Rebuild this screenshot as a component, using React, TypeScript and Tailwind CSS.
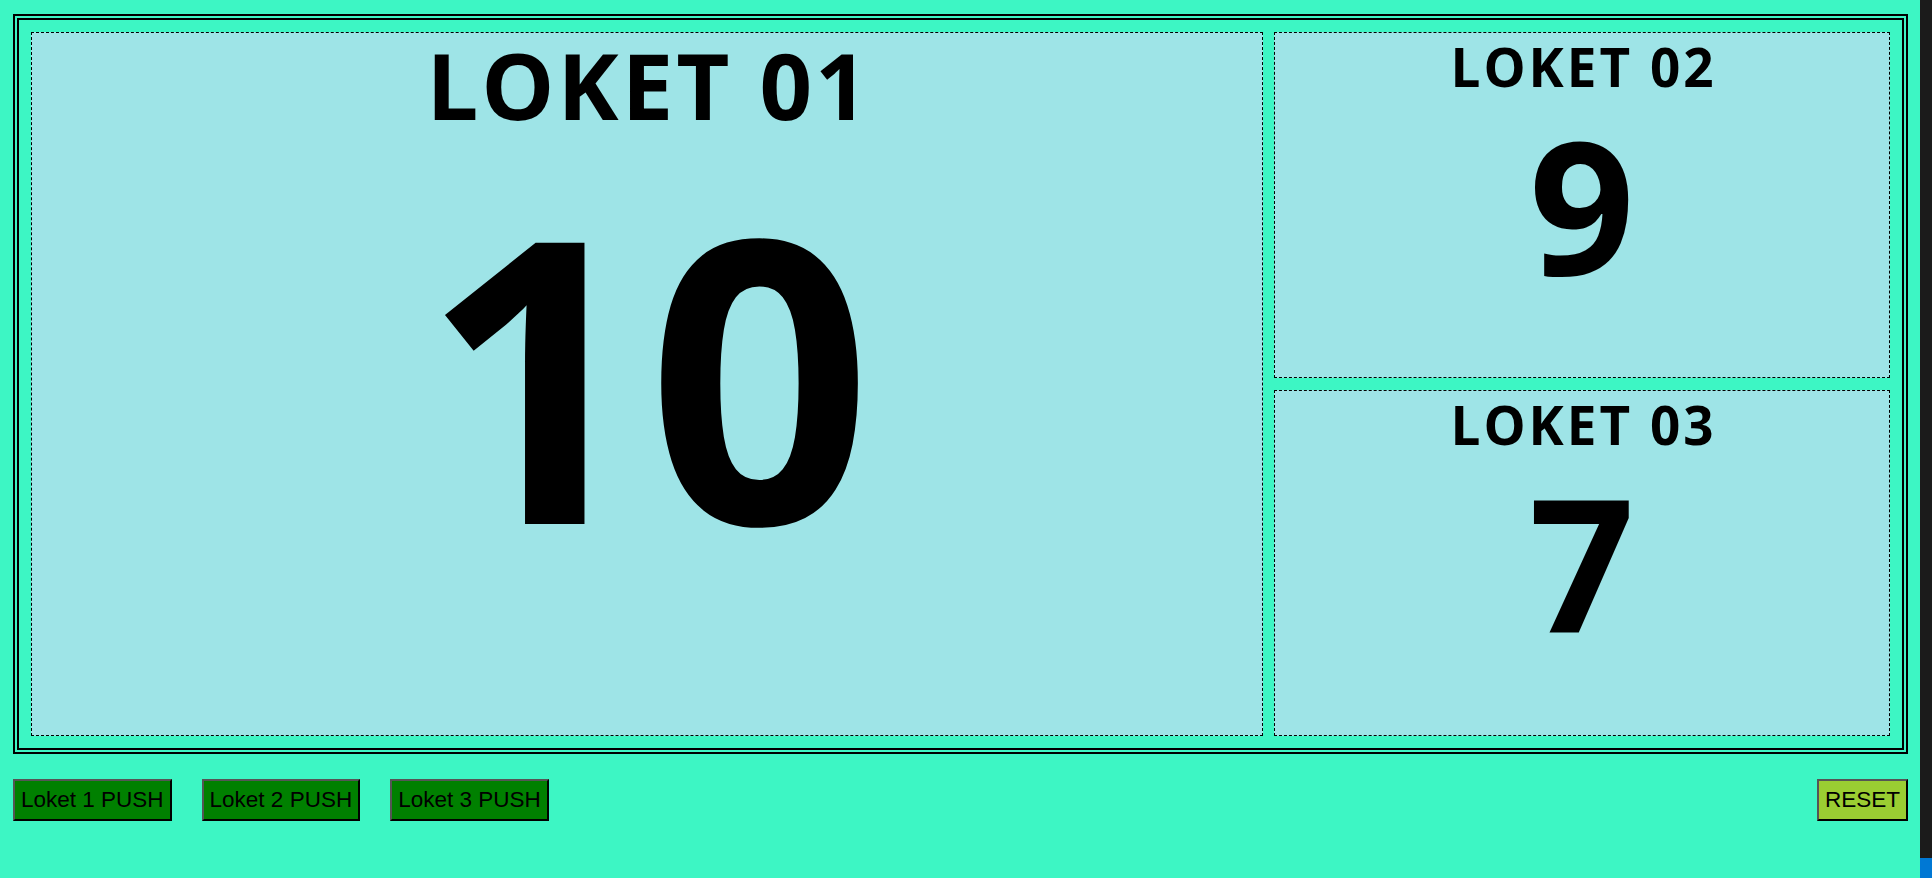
import { useState } from 'react'

const numFont = { fontFamily: '"Open Sans", "Noto Sans", sans-serif' }

function SmallLoket({ label, value }: { label: string; value: number }) {
  return (
    <div className="flex-1 border border-dashed border-black bg-[#9ee4e7] text-center" style={numFont}>
      <div className="pl-[3px] pt-[7px] text-[53px] font-bold leading-none tracking-[3px] text-black">{label}</div>
      <div className="mt-[18px] text-[185px] font-bold leading-none text-black">{value}</div>
    </div>
  )
}

export default function App() {
  const [counts, setCounts] = useState([10, 9, 7])

  const push = (i: number) => setCounts((c) => c.map((v, j) => (j === i ? v + 1 : v)))
  const reset = () => setCounts([0, 0, 0])

  const btn =
    'border-2 border-t-[#555] border-l-[#555] border-b-black border-r-black px-[6px] py-[6px] text-[22.5px] leading-[26px] text-black'

  return (
    <div className="flex h-screen w-full bg-[#3df6c4]" style={{ fontFamily: '"Liberation Sans", Arial, sans-serif' }}>
      <div className="flex flex-1 flex-col pl-[13px] pr-[12px] pt-[14px]">
        <div className="h-[740px] border-[6px] border-double border-black p-[12px]">
          <div className="grid h-full grid-cols-[2fr_1fr] gap-[11px]">
            <div className="border border-dashed border-black bg-[#9ee4e7] text-center" style={numFont}>
              <div className="pl-[3px] pt-[6px] text-[92px] font-bold leading-none tracking-[3px] text-black">LOKET 01</div>
              <div className="mt-[43px] text-[394px] font-bold leading-none text-black">{counts[0]}</div>
            </div>
            <div className="flex flex-col gap-[12px]">
              <SmallLoket label="LOKET 02" value={counts[1]} />
              <SmallLoket label="LOKET 03" value={counts[2]} />
            </div>
          </div>
        </div>

        <div className="mt-[25px] flex items-start">
          <div className="flex gap-[30px]">
            <button className={`${btn} bg-[#008000]`} onClick={() => push(0)}>
              Loket 1 PUSH
            </button>
            <button className={`${btn} bg-[#008000]`} onClick={() => push(1)}>
              Loket 2 PUSH
            </button>
            <button className={`${btn} bg-[#008000]`} onClick={() => push(2)}>
              Loket 3 PUSH
            </button>
          </div>
          <button className={`${btn} ml-auto bg-[#9acd32]`} onClick={reset}>
            RESET
          </button>
        </div>
      </div>

      {/* scrollbar strip */}
      <div className="flex w-[12px] flex-col justify-end bg-[#1b1b1b]">
        <div className="h-[20px] bg-[#0078d4]" />
      </div>
    </div>
  )
}
